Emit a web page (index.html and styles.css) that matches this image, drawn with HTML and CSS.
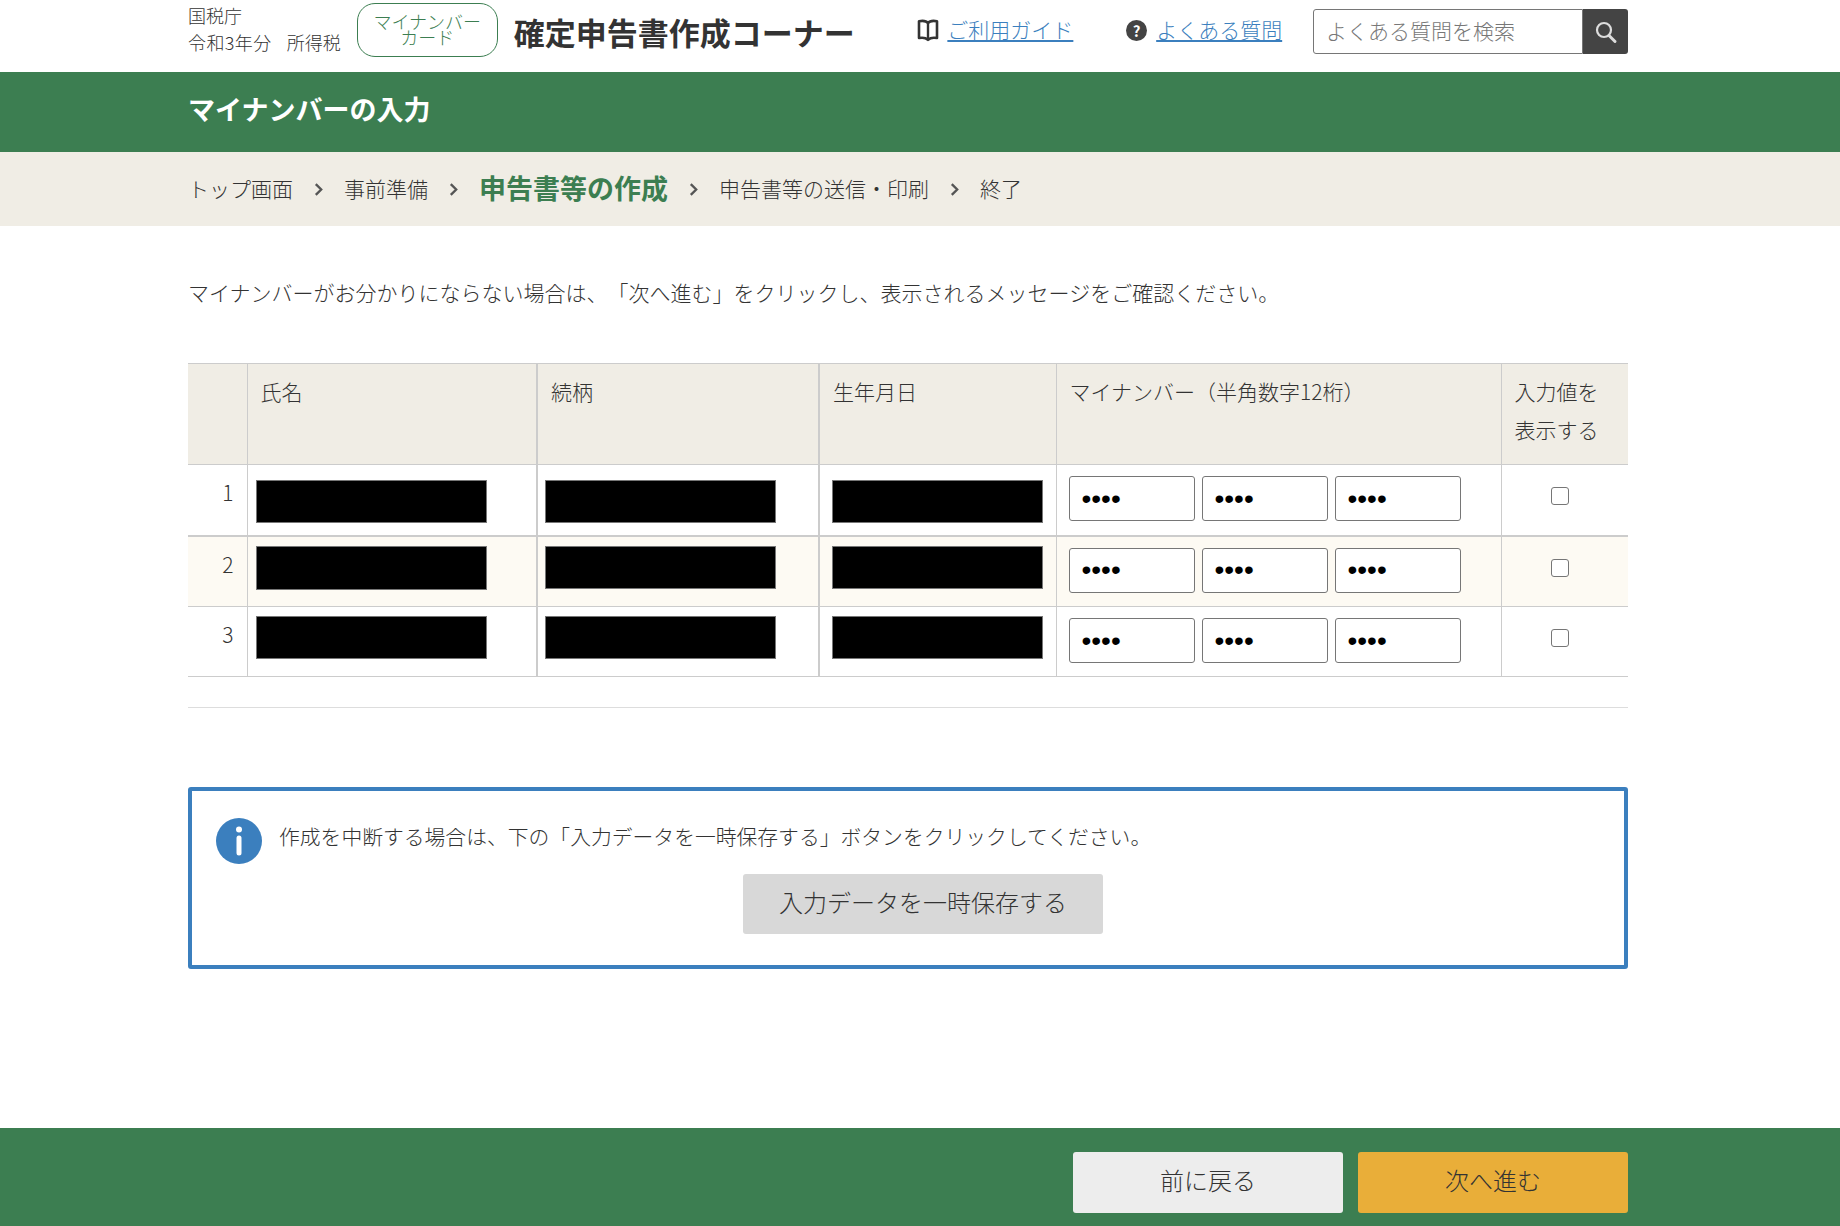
FILE: index.html
```html
<!DOCTYPE html>
<html lang="ja">
<head>
    <meta charset="UTF-8">
    <meta name="viewport" content="width=device-width, initial-scale=1.0">
    <title>マイナンバーの入力 - 確定申告書作成コーナー</title>
    <link rel="stylesheet" href="styles.css">
</head>
<body>
    <header class="site-header">
        <div class="wrap header-inner">
            <div class="agency">
                <div>国税庁</div>
                <div><span class="tax-year">令和3年分</span>所得税</div>
            </div>
            <div class="card-badge">マイナンバー<br>カード</div>
            <div class="site-title">確定申告書作成コーナー</div>
            <a href="#" class="head-link guide-link">
                <svg class="book-icon" viewBox="0 0 22 24" aria-hidden="true">
                    <path d="M11 5C9.500 3 6 2.500 2 3.200V20c3.500-.6 7-.2 9 1.800 2-2 5.500-2.400 9-1.800V3.200C16 2.500 12.500 3 11 5z" fill="none" stroke="#333" stroke-width="2.600" stroke-linejoin="round"/>
                    <path d="M11 5v16" stroke="#333" stroke-width="2.400"/>
                </svg>
                <span>ご利用ガイド</span>
            </a>
            <a href="#" class="head-link faq-link">
                <span class="faq-mark">?</span>
                <span>よくある質問</span>
            </a>
            <form class="search-box">
                <input type="text" class="search-input" placeholder="よくある質問を検索">
                <button type="button" class="search-btn" aria-label="検索">
                    <svg viewBox="0 0 24 24" width="24" height="24" aria-hidden="true">
                        <circle cx="10" cy="10" r="7" fill="none" stroke="#ddd" stroke-width="2.200"/>
                        <path d="M15 15.500l6 6" stroke="#ddd" stroke-width="3" stroke-linecap="round"/>
                    </svg>
                </button>
            </form>
        </div>
    </header>

    <div class="page-heading">
        <div class="wrap"><h1>マイナンバーの入力</h1></div>
    </div>

    <nav class="steps">
        <div class="wrap steps-inner">
            <span>トップ画面</span>
            <span class="step-sep"><svg viewBox="0 0 10 16" width="9" height="15" aria-hidden="true"><path d="M2 2l6 6-6 6" fill="none" stroke="#555" stroke-width="2.600"/></svg></span>
            <span>事前準備</span>
            <span class="step-sep"><svg viewBox="0 0 10 16" width="9" height="15" aria-hidden="true"><path d="M2 2l6 6-6 6" fill="none" stroke="#555" stroke-width="2.600"/></svg></span>
            <span class="step-current">申告書等の作成</span>
            <span class="step-sep"><svg viewBox="0 0 10 16" width="9" height="15" aria-hidden="true"><path d="M2 2l6 6-6 6" fill="none" stroke="#555" stroke-width="2.600"/></svg></span>
            <span>申告書等の送信・印刷</span>
            <span class="step-sep"><svg viewBox="0 0 10 16" width="9" height="15" aria-hidden="true"><path d="M2 2l6 6-6 6" fill="none" stroke="#555" stroke-width="2.600"/></svg></span>
            <span>終了</span>
        </div>
    </nav>

    <main class="wrap content">
        <p class="intro">マイナンバーがお分かりにならない場合は、「次へ進む」をクリックし、表示されるメッセージをご確認ください。</p>

        <table class="number-table">
            <thead>
                <tr>
                    <th class="col-no"></th>
                    <th class="col-name">氏名</th>
                    <th class="col-rel">続柄</th>
                    <th class="col-birth">生年月日</th>
                    <th class="col-number">マイナンバー（半角数字12桁）</th>
                    <th class="col-show">入力値を<br>表示する</th>
                </tr>
            </thead>
            <tbody>
                <tr>
                    <td class="col-no">1</td>
                    <td class="col-name"><div class="redact"></div></td>
                    <td class="col-rel"><div class="redact"></div></td>
                    <td class="col-birth"><div class="redact"></div></td>
                    <td class="col-number">
                        <div class="number-inputs">
                            <input type="password" value="0000">
                            <input type="password" value="0000">
                            <input type="password" value="0000">
                        </div>
                    </td>
                    <td class="col-show"><input type="checkbox"></td>
                </tr>
                <tr class="row-alt">
                    <td class="col-no">2</td>
                    <td class="col-name"><div class="redact redact-tall"></div></td>
                    <td class="col-rel"><div class="redact"></div></td>
                    <td class="col-birth"><div class="redact"></div></td>
                    <td class="col-number">
                        <div class="number-inputs">
                            <input type="password" value="0000">
                            <input type="password" value="0000">
                            <input type="password" value="0000">
                        </div>
                    </td>
                    <td class="col-show"><input type="checkbox"></td>
                </tr>
                <tr class="row-last">
                    <td class="col-no">3</td>
                    <td class="col-name"><div class="redact"></div></td>
                    <td class="col-rel"><div class="redact"></div></td>
                    <td class="col-birth"><div class="redact"></div></td>
                    <td class="col-number">
                        <div class="number-inputs">
                            <input type="password" value="0000">
                            <input type="password" value="0000">
                            <input type="password" value="0000">
                        </div>
                    </td>
                    <td class="col-show"><input type="checkbox"></td>
                </tr>
            </tbody>
        </table>

        <hr class="divider">

        <section class="info-box">
            <div class="info-icon">
                <svg viewBox="0 0 46 46" width="46" height="46" aria-hidden="true">
                    <circle cx="23" cy="23" r="23" fill="#3b7fbe"/>
                    <circle cx="23" cy="11.500" r="3" fill="#fff"/>
                    <rect x="20.500" y="17.500" width="5" height="20" rx="2.500" fill="#fff"/>
                </svg>
            </div>
            <div class="info-body">
                <p>作成を中断する場合は、下の「入力データを一時保存する」ボタンをクリックしてください。</p>
                <a href="#" class="save-btn">入力データを一時保存する</a>
            </div>
        </section>
    </main>

    <footer class="site-footer">
        <div class="wrap footer-inner">
            <a href="#" class="foot-btn back-btn">前に戻る</a>
            <a href="#" class="foot-btn next-btn">次へ進む</a>
        </div>
    </footer>
</body>
</html>
```

FILE: styles.css
```css
:root {
    --green: #3c7e51;
    --beige: #f0ede5;
    --line: #cccccc;
    --blue: #3b7fbe;
    --text: #333333;
}

* {
    margin: 0;
    padding: 0;
    box-sizing: border-box;
}

body {
    display: flex;
    flex-direction: column;
    min-height: 100vh;
    background: white;
    color: var(--text);
    font-family: "Noto Sans CJK JP", "Noto Sans", sans-serif;
    font-size: 21px;
    font-weight: 300;
    text-spacing-trim: space-all;
}

a {
    text-decoration: none;
}

.wrap {
    width: 1440px;
    margin-left: 188px;
}

/* header */
.site-header {
    height: 72px;
}

.header-inner {
    display: flex;
    align-items: flex-start;
}

.agency {
    width: 169px;
    padding-top: 2px;
    font-size: 18px;
    line-height: 27px;
}

.tax-year {
    margin-right: 15px;
    letter-spacing: 0.400px;
}

.card-badge {
    width: 141px;
    height: 54px;
    margin-top: 3px;
    padding-top: 9px;
    border: 1px solid var(--green);
    border-radius: 18px;
    color: var(--green);
    font-size: 18px;
    line-height: 16px;
    text-align: center;
}

.site-title {
    width: 404px;
    margin-left: 16px;
    padding-top: 9px;
    font-size: 31px;
    font-weight: bold;
    line-height: 46px;
    white-space: nowrap;
}

.head-link {
    display: flex;
    align-items: center;
    height: 40px;
    margin-top: 9px;
    color: var(--blue);
    line-height: 40px;
}

.head-link span:last-child {
    text-decoration: underline;
}

.guide-link {
    width: 209px;
}

.book-icon {
    width: 22px;
    height: 24px;
    margin-top: 2px;
    margin-right: 8px;
}

.faq-link {
    width: 187px;
}

.faq-mark {
    width: 21px;
    height: 21px;
    margin-top: 2px;
    margin-right: 9px;
    border-radius: 50%;
    background: #444;
    color: white;
    font-size: 15px;
    font-weight: bold;
    line-height: 21px;
    text-align: center;
}

.search-box {
    display: flex;
    margin-top: 9px;
}

.search-input {
    width: 270px;
    height: 45px;
    padding: 0 12px 3px;
    border: 1px solid #767676;
    border-radius: 3px 0 0 3px;
    color: var(--text);
    font-family: inherit;
    font-size: 21px;
    font-weight: 300;
}

.search-input::placeholder {
    color: #777;
}

.search-btn {
    display: flex;
    align-items: center;
    justify-content: center;
    width: 45px;
    height: 45px;
    border: none;
    border-radius: 0 3px 3px 0;
    background: #444;
}

/* green title bar */
.page-heading {
    height: 80px;
    background: var(--green);
}

.page-heading h1 {
    color: white;
    font-size: 27px;
    font-weight: bold;
    line-height: 74px;
}

/* steps */
.steps {
    height: 74px;
    background: var(--beige);
}

.steps-inner {
    display: flex;
    align-items: center;
    height: 74px;
    padding-bottom: 3px;
}

.step-sep {
    display: flex;
    align-items: center;
    justify-content: center;
    width: 51px;
    margin-top: 3px;
}

.step-current {
    color: var(--green);
    font-size: 27px;
    font-weight: bold;
}

/* main */
.intro {
    margin-top: 50px;
    line-height: 32px;
}

.number-table {
    width: 1440px;
    margin-top: 55px;
    border-collapse: collapse;
    table-layout: fixed;
}

.number-table th {
    height: 101px;
    padding: 8px 13px 0;
    border-top: 1px solid var(--line);
    border-bottom: 1px solid var(--line);
    background: var(--beige);
    font-weight: 300;
    line-height: 38px;
    text-align: left;
    vertical-align: top;
}

.number-table td {
    height: 71px;
    border-bottom: 1px solid var(--line);
    vertical-align: top;
}

.number-table .row-last td {
    height: 70px;
}

.number-table .row-alt td {
    border-top: 2px solid var(--line);
}

.number-table th + th,
.number-table td + td {
    border-left: 1px solid var(--line);
}

.number-table .col-rel,
.number-table .col-birth {
    border-left-width: 2px;
}

.col-no {
    width: 59px;
}

.col-name {
    width: 290px;
}

.col-rel {
    width: 282px;
}

.col-birth {
    width: 237px;
}

.col-number {
    width: 445px;
}

.col-show {
    width: 127px;
}

.number-table td.col-no {
    padding: 8px 13px 0 0;
    line-height: 38px;
    text-align: right;
}

.number-table td.col-name {
    padding-left: 8px;
}

.number-table td.col-rel {
    padding-left: 7px;
}

.number-table td.col-birth {
    padding-left: 12px;
}

.number-table td.col-number {
    padding: 11px 0 0 12px;
}

.number-table td.col-show {
    padding: 22px 9px 0 0;
}

.col-show input {
    display: block;
    width: 18px;
    height: 18px;
    margin: 0 auto;
    border: 1.500px solid #767676;
    border-radius: 3px;
    background: white;
    appearance: none;
}

.redact {
    height: 43px;
    margin-top: 15px;
    border: 1px solid #777;
    background: black;
}

.col-name .redact,
.col-rel .redact {
    width: 231px;
}

.col-birth .redact {
    width: 211px;
}

.row-alt td {
    background: #fdfaf3;
}

.row-alt .redact,
.row-last .redact {
    margin-top: 9px;
}

.row-alt .redact-tall {
    height: 44px;
}

.number-inputs {
    display: flex;
    gap: 7px;
}

.number-inputs input {
    width: 126px;
    height: 45px;
    padding: 0 12px;
    border: 1px solid #767676;
    border-radius: 3px;
    background: white;
    font-family: "Liberation Sans", sans-serif;
    font-size: 28px;
}

.divider {
    margin-top: 30px;
    border: none;
    border-top: 1px solid #dddddd;
}

/* info box */
.info-box {
    display: flex;
    height: 182px;
    margin-top: 79px;
    padding: 27px 57px 0 24px;
    border: 4px solid var(--blue);
    border-radius: 3px;
}

.info-icon {
    height: 46px;
    margin-right: 17px;
}

.info-body {
    flex: 1;
    text-align: center;
}

.info-body p {
    font-size: 20.800px;
    line-height: 36px;
    text-align: left;
}

.save-btn {
    display: block;
    width: 360px;
    height: 60px;
    margin: 20px auto 0;
    border-radius: 3px;
    background: #d8d8d8;
    color: var(--text);
    font-size: 24px;
    line-height: 56px;
}

/* footer */
.site-footer {
    height: 98px;
    margin-top: auto;
    background: var(--green);
}

.footer-inner {
    display: flex;
    justify-content: flex-end;
    gap: 15px;
    padding-top: 24px;
}

.foot-btn {
    width: 270px;
    height: 61px;
    border-radius: 3px;
    color: var(--text);
    font-size: 24px;
    line-height: 55px;
    text-align: center;
}

.back-btn {
    background: #ededed;
}

.next-btn {
    background: #e9ae39;
}
```
